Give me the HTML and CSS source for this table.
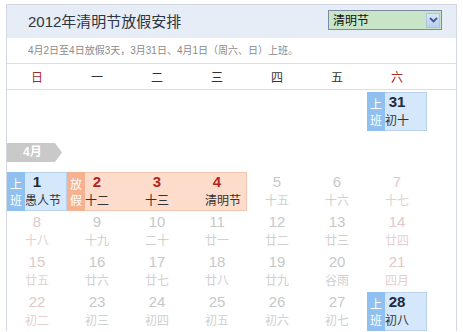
FILE: index.html
```html
<!DOCTYPE html>
<html lang="zh-CN">
<head>
<meta charset="utf-8">
<title>2012年清明节放假安排</title>
<link rel="stylesheet" href="styles.css">
</head>
<body>
<div class="cal">
  <div class="head">
    <h1 class="title">2012年清明节放假安排</h1>
    <div class="select">
      <span class="select-text">清明节</span>
      <span class="select-btn"><svg width="9" height="6" viewBox="0 0 9 6"><path d="M1 1 L4.5 4.5 L8 1" fill="none" stroke="#3d5a9a" stroke-width="1.8"/></svg></span>
    </div>
  </div>
  <div class="note">4月2日至4日放假3天，3月31日、4月1日（周六、日）上班。</div>
  <div class="week">
    <span class="wd end">日</span><span class="wd">一</span><span class="wd">二</span><span class="wd">三</span><span class="wd">四</span><span class="wd">五</span><span class="wd end">六</span>
  </div>
  <div class="grid">
    <div class="cell empty"></div><div class="cell empty"></div><div class="cell empty"></div><div class="cell empty"></div><div class="cell empty"></div><div class="cell empty"></div>
    <div class="cell work"><span class="tag">上<br>班</span><span class="num">31</span><span class="lunar">初十</span></div>

    <div class="month"><span class="month-label">4月</span></div>

    <div class="cell work"><span class="tag">上<br>班</span><span class="num">1</span><span class="lunar">愚人节</span></div>
    <div class="cell off"><span class="tag">放<br>假</span><span class="num">2</span><span class="lunar">十二</span></div>
    <div class="cell off"><span class="num">3</span><span class="lunar">十三</span></div>
    <div class="cell off off-last"><span class="num">4</span><span class="lunar">清明节</span></div>
    <div class="cell"><span class="num">5</span><span class="lunar">十五</span></div>
    <div class="cell"><span class="num">6</span><span class="lunar">十六</span></div>
    <div class="cell wkend"><span class="num">7</span><span class="lunar">十七</span></div>

    <div class="cell wkend"><span class="num">8</span><span class="lunar">十八</span></div>
    <div class="cell"><span class="num">9</span><span class="lunar">十九</span></div>
    <div class="cell"><span class="num">10</span><span class="lunar">二十</span></div>
    <div class="cell"><span class="num">11</span><span class="lunar">廿一</span></div>
    <div class="cell"><span class="num">12</span><span class="lunar">廿二</span></div>
    <div class="cell"><span class="num">13</span><span class="lunar">廿三</span></div>
    <div class="cell wkend"><span class="num">14</span><span class="lunar">廿四</span></div>

    <div class="cell wkend"><span class="num">15</span><span class="lunar">廿五</span></div>
    <div class="cell"><span class="num">16</span><span class="lunar">廿六</span></div>
    <div class="cell"><span class="num">17</span><span class="lunar">廿七</span></div>
    <div class="cell"><span class="num">18</span><span class="lunar">廿八</span></div>
    <div class="cell"><span class="num">19</span><span class="lunar">廿九</span></div>
    <div class="cell"><span class="num">20</span><span class="lunar">谷雨</span></div>
    <div class="cell wkend"><span class="num">21</span><span class="lunar">四月</span></div>

    <div class="cell wkend"><span class="num">22</span><span class="lunar">初二</span></div>
    <div class="cell"><span class="num">23</span><span class="lunar">初三</span></div>
    <div class="cell"><span class="num">24</span><span class="lunar">初四</span></div>
    <div class="cell"><span class="num">25</span><span class="lunar">初五</span></div>
    <div class="cell"><span class="num">26</span><span class="lunar">初六</span></div>
    <div class="cell"><span class="num">27</span><span class="lunar">初七</span></div>
    <div class="cell work"><span class="tag">上<br>班</span><span class="num">28</span><span class="lunar">初八</span></div>
  </div>
</div>
</body>
</html>
```

FILE: styles.css
```css
html, body {
  margin: 0;
  padding: 0;
  background: #ffffff;
}

body {
  font-family: "Liberation Sans", "Noto Sans CJK SC", sans-serif;
  overflow: hidden;
}

.cal {
  margin: 4px 0 0 6px;
  width: 449px;
  border: 1px solid #d3d8e0;
  border-bottom: none;
  background: #ffffff;
}

.head {
  height: 33px;
  background: #e7edf7;
  display: flex;
  align-items: flex-start;
  justify-content: space-between;
}

.title {
  margin: 0;
  padding-left: 21px;
  font-size: 15px;
  font-weight: normal;
  line-height: 33px;
  color: #2e3440;
}

.select {
  margin: 5px 14px 0 0;
  width: 112px;
  height: 18px;
  border: 1px solid #7c8aa6;
  background: #c8e5c8;
  display: flex;
  align-items: center;
  justify-content: space-between;
}

.select-text {
  padding-left: 4px;
  font-family: "Noto Sans CJK SC", sans-serif;
  font-size: 12px;
  line-height: 18px;
  color: #111111;
}

.select-btn {
  width: 14px;
  height: 15px;
  margin-right: 1px;
  background: linear-gradient(#dbe6f6, #b9cdee);
  border: 1px solid #b3c3dd;
  box-sizing: border-box;
  display: flex;
  align-items: center;
  justify-content: center;
}

.note {
  height: 25px;
  line-height: 25px;
  padding-left: 21px;
  font-size: 10px;
  color: #8a8a8a;
  border-bottom: 1px solid #dedede;
  white-space: nowrap;
}

.week {
  height: 25px;
  display: grid;
  grid-template-columns: repeat(7, 60px);
  border-bottom: 1px solid #dedede;
}

.wd {
  text-align: center;
  font-family: "Noto Sans CJK SC", sans-serif;
  font-size: 12px;
  line-height: 25px;
  color: #333333;
}

.wd.end {
  color: #a52a2a;
}

.grid {
  padding-top: 2px;
  display: grid;
  grid-template-columns: repeat(7, 60px);
  row-gap: 1px;
}

.cell {
  position: relative;
  height: 39px;
  display: flex;
  flex-direction: column;
  align-items: stretch;
}

.num {
  padding-top: 1px;
  text-align: center;
  font-size: 15px;
  line-height: 18px;
  color: #c8c8c8;
}

.lunar {
  display: block;
  padding: 1px 18px 0 18px;
  text-align: center;
  font-family: "Noto Sans CJK SC", sans-serif;
  font-size: 12px;
  line-height: 16px;
  color: #d0d0d0;
  white-space: nowrap;
}

.wkend .num {
  color: #e2c8c8;
}

.wkend .lunar {
  color: #e4d0d0;
}

.tag {
  position: absolute;
  left: 0;
  top: 0;
  bottom: 0;
  width: 18px;
  display: flex;
  align-items: center;
  justify-content: center;
  text-align: center;
  font-family: "Noto Sans CJK SC", sans-serif;
  font-size: 12px;
  line-height: 16px;
  color: #ffffff;
}

.work {
  background: #d4e7fb;
  box-shadow: inset 0 0 0 1px #b7d2ef;
}

.work .tag {
  background: #8fc0f0;
}

.off {
  background: #fddccb;
  box-shadow: inset 0 1px 0 #f2c6ae, inset 0 -1px 0 #f2c6ae;
}

.off-last {
  box-shadow: inset 0 1px 0 #f2c6ae, inset 0 -1px 0 #f2c6ae, inset -1px 0 0 #f2c6ae;
}

.off .tag {
  background: #f5b190;
}

.work .num {
  font-weight: bold;
  color: #1c2a3c;
}

.off .num {
  font-weight: bold;
  color: #b3261e;
}

.work .lunar,
.off .lunar {
  color: #333333;
}

.month {
  grid-column: 1 / -1;
  height: 39px;
}

.month-label {
  display: block;
  margin-top: 11px;
  width: 55px;
  height: 19px;
  padding-left: 16px;
  box-sizing: border-box;
  background: #c9c9c9;
  clip-path: polygon(0 0, 48px 0, 55px 50%, 48px 100%, 0 100%);
  font-family: "Liberation Sans", "Noto Sans CJK SC", sans-serif;
  font-size: 12px;
  font-weight: bold;
  line-height: 19px;
  color: #ffffff;
}
```
